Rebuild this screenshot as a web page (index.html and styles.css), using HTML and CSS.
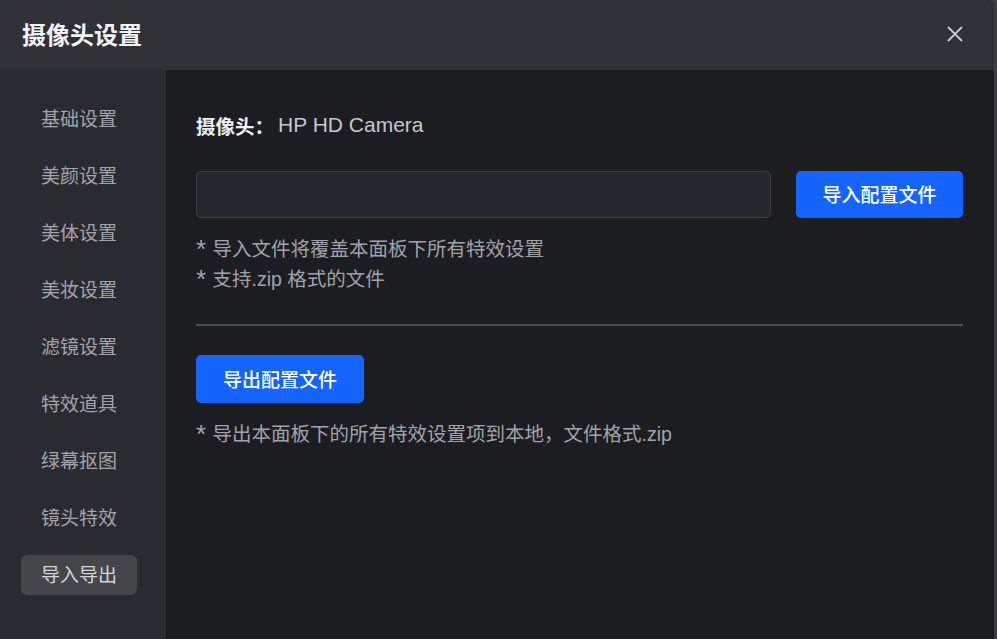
FILE: index.html
```html
<!DOCTYPE html>
<html lang="zh-CN">
<head>
<meta charset="utf-8">
<title>摄像头设置</title>
<link rel="stylesheet" href="styles.css">
</head>
<body>
<div class="dialog">
  <header class="dialog-header">
    <h1 class="dialog-title">摄像头设置</h1>
    <button class="close-btn" aria-label="关闭">
      <svg width="18" height="18" viewBox="0 0 18 18"><path d="M2 2 L16 16 M16 2 L2 16" stroke="#c9cbd0" stroke-width="1.8" fill="none"/></svg>
    </button>
  </header>
  <div class="dialog-body">
    <nav class="sidebar">
      <div class="nav-item">基础设置</div>
      <div class="nav-item">美颜设置</div>
      <div class="nav-item">美体设置</div>
      <div class="nav-item">美妆设置</div>
      <div class="nav-item">滤镜设置</div>
      <div class="nav-item">特效道具</div>
      <div class="nav-item">绿幕抠图</div>
      <div class="nav-item">镜头特效</div>
      <div class="nav-item active">导入导出</div>
    </nav>
    <main class="content">
      <div class="camera-line"><span class="camera-label">摄像头：</span><span class="camera-name">HP HD Camera</span></div>
      <div class="import-row">
        <div class="file-input"></div>
        <button class="primary-btn import-btn">导入配置文件</button>
      </div>
      <div class="notes">
        <p><span class="star">*</span> 导入文件将覆盖本面板下所有特效设置</p>
        <p><span class="star">*</span> 支持.zip 格式的文件</p>
      </div>
      <hr class="divider">
      <button class="primary-btn export-btn">导出配置文件</button>
      <div class="notes export-notes">
        <p><span class="star">*</span> 导出本面板下的所有特效设置项到本地，文件格式.zip</p>
      </div>
    </main>
  </div>
</div>
</body>
</html>
```

FILE: styles.css
```css
* { box-sizing: border-box; }
html, body {
  margin: 0;
  padding: 0;
  height: 100%;
}
body {
  background: #3b3d42;
  font-family: "Liberation Sans", "Noto Sans CJK SC", sans-serif;
  overflow: hidden;
}
.dialog {
  width: 994px;
  height: 639px;
  display: flex;
  flex-direction: column;
  background: #1c1d21;
  border-top-right-radius: 6px;
  overflow: hidden;
}
.dialog-header {
  height: 70px;
  flex: none;
  background: #2f3136;
  display: flex;
  align-items: center;
  justify-content: space-between;
  padding: 0 30px 3px 22px;
}
.dialog-title {
  margin: 0;
  font-size: 24px;
  font-weight: 700;
  color: #f2f3f5;
}
.close-btn {
  background: none;
  border: 0;
  padding: 0;
  width: 18px;
  height: 18px;
  display: flex;
  cursor: pointer;
}
.dialog-body {
  flex: 1;
  display: flex;
  min-height: 0;
}
.sidebar {
  width: 166px;
  flex: none;
  background: #2a2b30;
  padding: 29px 0 0 21px;
  display: flex;
  flex-direction: column;
  gap: 17px;
}
.nav-item {
  width: 116px;
  height: 40px;
  padding-bottom: 3px;
  display: flex;
  align-items: center;
  justify-content: center;
  font-size: 19px;
  color: #a2a5ac;
  border-radius: 6px;
}
.nav-item.active {
  background: #45464a;
  color: #d3d5da;
}
.content {
  flex: 1;
  padding: 40px 31px 0 30px;
  display: flex;
  flex-direction: column;
  align-items: flex-start;
}
.camera-line {
  height: 30px;
  display: flex;
  align-items: center;
  font-size: 19.5px;
}
.camera-label {
  color: #eeeff2;
  font-weight: 700;
}
.camera-name {
  margin-left: 4px;
  font-size: 21px;
  color: #c4c7cd;
}
.import-row {
  margin-top: 31px;
  width: 100%;
  display: flex;
  gap: 25px;
}
.file-input {
  flex: 1;
  height: 47px;
  background: #25262b;
  border: 1px solid #3c3d42;
  border-radius: 5px;
}
.primary-btn {
  background: #1664ff;
  color: #ffffff;
  border: 0;
  border-radius: 5px;
  font-family: "Liberation Sans", "Noto Sans CJK SC", sans-serif;
  font-size: 19px;
  font-weight: 500;
  height: 47px;
  padding: 0 0 2px;
}
.import-btn {
  width: 167px;
  flex: none;
}
.notes {
  margin-top: 16px;
  font-size: 19.5px;
  color: #a0a3a9;
  line-height: 30px;
}
.notes p { margin: 0; }
.star {
  font-size: 26px;
  line-height: 0;
  vertical-align: -2px;
  margin-right: 1px;
}
.divider {
  width: 100%;
  margin: 30px 0 0 0;
  border: 0;
  border-top: 2px solid #4a4b50;
}
.export-btn {
  margin-top: 29px;
  width: 168px;
  height: 48px;
}
.export-notes {
  margin-top: 16px;
}
```
